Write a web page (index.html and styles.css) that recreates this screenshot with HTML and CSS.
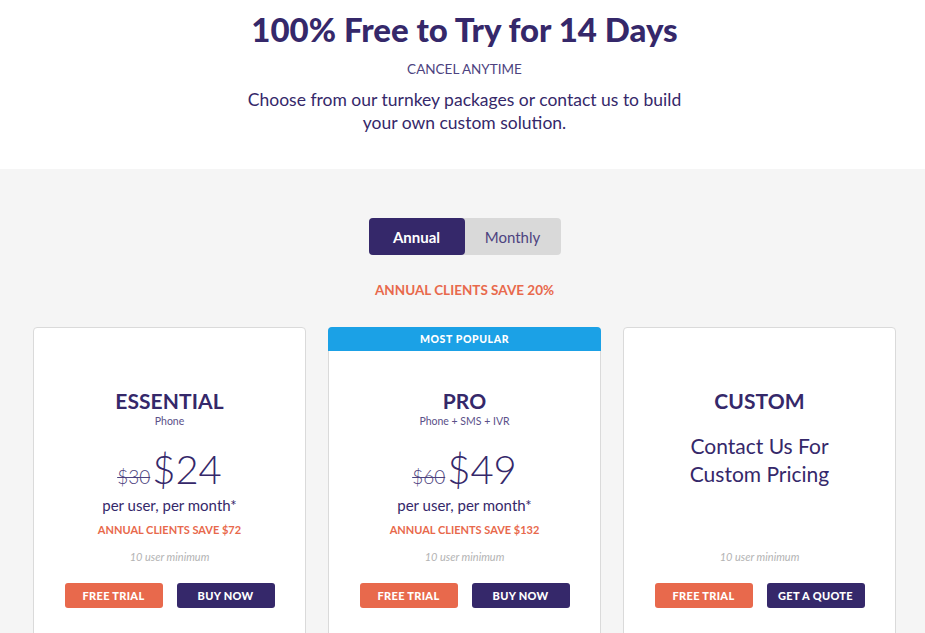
FILE: index.html
```html
<!DOCTYPE html>
<html lang="en">
<head>
<meta charset="utf-8">
<title>Pricing</title>
<link rel="stylesheet" href="styles.css">
</head>
<body>
<header class="intro">
  <h1 class="intro-title">100% Free to Try for 14 Days</h1>
  <p class="intro-kicker">CANCEL ANYTIME</p>
  <p class="intro-text">Choose from our turnkey packages or contact us to build<br>your own custom solution.</p>
</header>
<main class="pricing">
  <div class="toggle">
    <button class="toggle-btn is-active">Annual</button>
    <button class="toggle-btn">Monthly</button>
  </div>
  <p class="save-note">ANNUAL CLIENTS SAVE 20%</p>
  <div class="cards">
    <section class="card">
      <h2 class="plan-name">ESSENTIAL</h2>
      <p class="plan-sub">Phone</p>
      <p class="price"><s class="price-old">$30</s><span class="price-new">$24</span></p>
      <p class="per">per user, per month*</p>
      <p class="plan-save">ANNUAL CLIENTS SAVE $72</p>
      <div class="card-foot">
        <p class="minimum">10 user minimum</p>
        <div class="actions">
          <a class="btn btn-orange">FREE TRIAL</a>
          <a class="btn btn-purple">BUY NOW</a>
        </div>
      </div>
    </section>
    <section class="card">
      <div class="ribbon">MOST POPULAR</div>
      <h2 class="plan-name">PRO</h2>
      <p class="plan-sub">Phone + SMS + IVR</p>
      <p class="price"><s class="price-old">$60</s><span class="price-new">$49</span></p>
      <p class="per">per user, per month*</p>
      <p class="plan-save">ANNUAL CLIENTS SAVE $132</p>
      <div class="card-foot">
        <p class="minimum">10 user minimum</p>
        <div class="actions">
          <a class="btn btn-orange">FREE TRIAL</a>
          <a class="btn btn-purple">BUY NOW</a>
        </div>
      </div>
    </section>
    <section class="card">
      <h2 class="plan-name">CUSTOM</h2>
      <p class="contact">Contact Us For<br>Custom Pricing</p>
      <div class="card-foot">
        <p class="minimum">10 user minimum</p>
        <div class="actions">
          <a class="btn btn-orange">FREE TRIAL</a>
          <a class="btn btn-purple">GET A QUOTE</a>
        </div>
      </div>
    </section>
  </div>
</main>
</body>
</html>
```
FILE: styles.css
```css
* { box-sizing: border-box; }
html, body { margin: 0; padding: 0; }
body {
  font-family: Lato, "Open Sans", "Liberation Sans", sans-serif;
  color: #35286a;
  background: #f5f5f5;
}
p, h1, h2 { margin: 0; }

.intro {
  background: #fff;
  text-align: center;
  padding: 11px 0 35px 4px;
}
.intro-title {
  font-size: 33px;
  font-weight: 900;
  line-height: 36px;
  color: #35286a;
}
.intro-kicker {
  margin-top: 13px;
  font-size: 13.5px;
  line-height: 18px;
  color: #4d4380;
}
.intro-text {
  margin-top: 10px;
  font-size: 17.5px;
  line-height: 23px;
  color: #35286a;
}

.pricing {
  padding: 49px 0 0 4px;
  display: flex;
  flex-direction: column;
  align-items: center;
}
.toggle {
  display: flex;
  background: #d9d9d9;
  border-radius: 4px;
}
.toggle-btn {
  width: 96px;
  height: 37px;
  border: 0;
  border-radius: 4px;
  background: transparent;
  font-family: inherit;
  font-size: 15px;
  color: #4d4380;
}
.toggle-btn.is-active {
  background: #35286a;
  color: #fff;
  font-weight: 700;
}
.save-note {
  margin-top: 27px;
  font-size: 13.5px;
  font-weight: 700;
  color: #e8694c;
}

.cards {
  margin-top: 29px;
  display: flex;
  gap: 22px;
}
.card {
  position: relative;
  width: 273px;
  height: 330px;
  background: #fff;
  border: 1px solid #dadada;
  border-radius: 4px;
  padding: 60px 0 0;
  display: flex;
  flex-direction: column;
  align-items: center;
  text-align: center;
}
.ribbon {
  position: absolute;
  top: -1px;
  left: -1px;
  right: -1px;
  height: 24px;
  background: #1ba1e6;
  border-radius: 4px 4px 0 0;
  color: #fff;
  font-size: 10.5px;
  font-weight: 900;
  letter-spacing: 0.6px;
  line-height: 24px;
}
.plan-name {
  font-size: 21px;
  font-weight: 700;
  letter-spacing: 0.1px;
  line-height: 26px;
}
.plan-sub {
  font-size: 10.5px;
  line-height: 14px;
  color: #5a5088;
}
.price {
  margin-top: 21px;
  line-height: 40px;
  display: flex;
  align-items: baseline;
}
.price-old {
  font-size: 19px;
  font-weight: 300;
  color: #4d4380;
}
.price-new {
  font-size: 40px;
  font-weight: 300;
  margin-left: 2px;
}
.per {
  margin-top: -2px;
  font-size: 15px;
  line-height: 20px;
}
.plan-save {
  margin-top: 8px;
  font-size: 11px;
  font-weight: 700;
  color: #e8694c;
}
.contact {
  margin-top: 18px;
  font-size: 21px;
  line-height: 28px;
}
.card-foot {
  margin-top: auto;
  margin-bottom: 48px;
  display: flex;
  flex-direction: column;
  align-items: center;
}
.minimum {
  font-size: 11px;
  font-style: italic;
  color: #b3b3b3;
}
.actions {
  margin-top: 20px;
  display: flex;
  gap: 14px;
}
.btn {
  width: 98px;
  height: 25px;
  border-radius: 3px;
  color: #fff;
  font-size: 11px;
  font-weight: 900;
  letter-spacing: 0.3px;
  line-height: 25px;
  text-align: center;
}
.btn-orange { background: #e8694c; }
.btn-purple { background: #35286a; }
```
